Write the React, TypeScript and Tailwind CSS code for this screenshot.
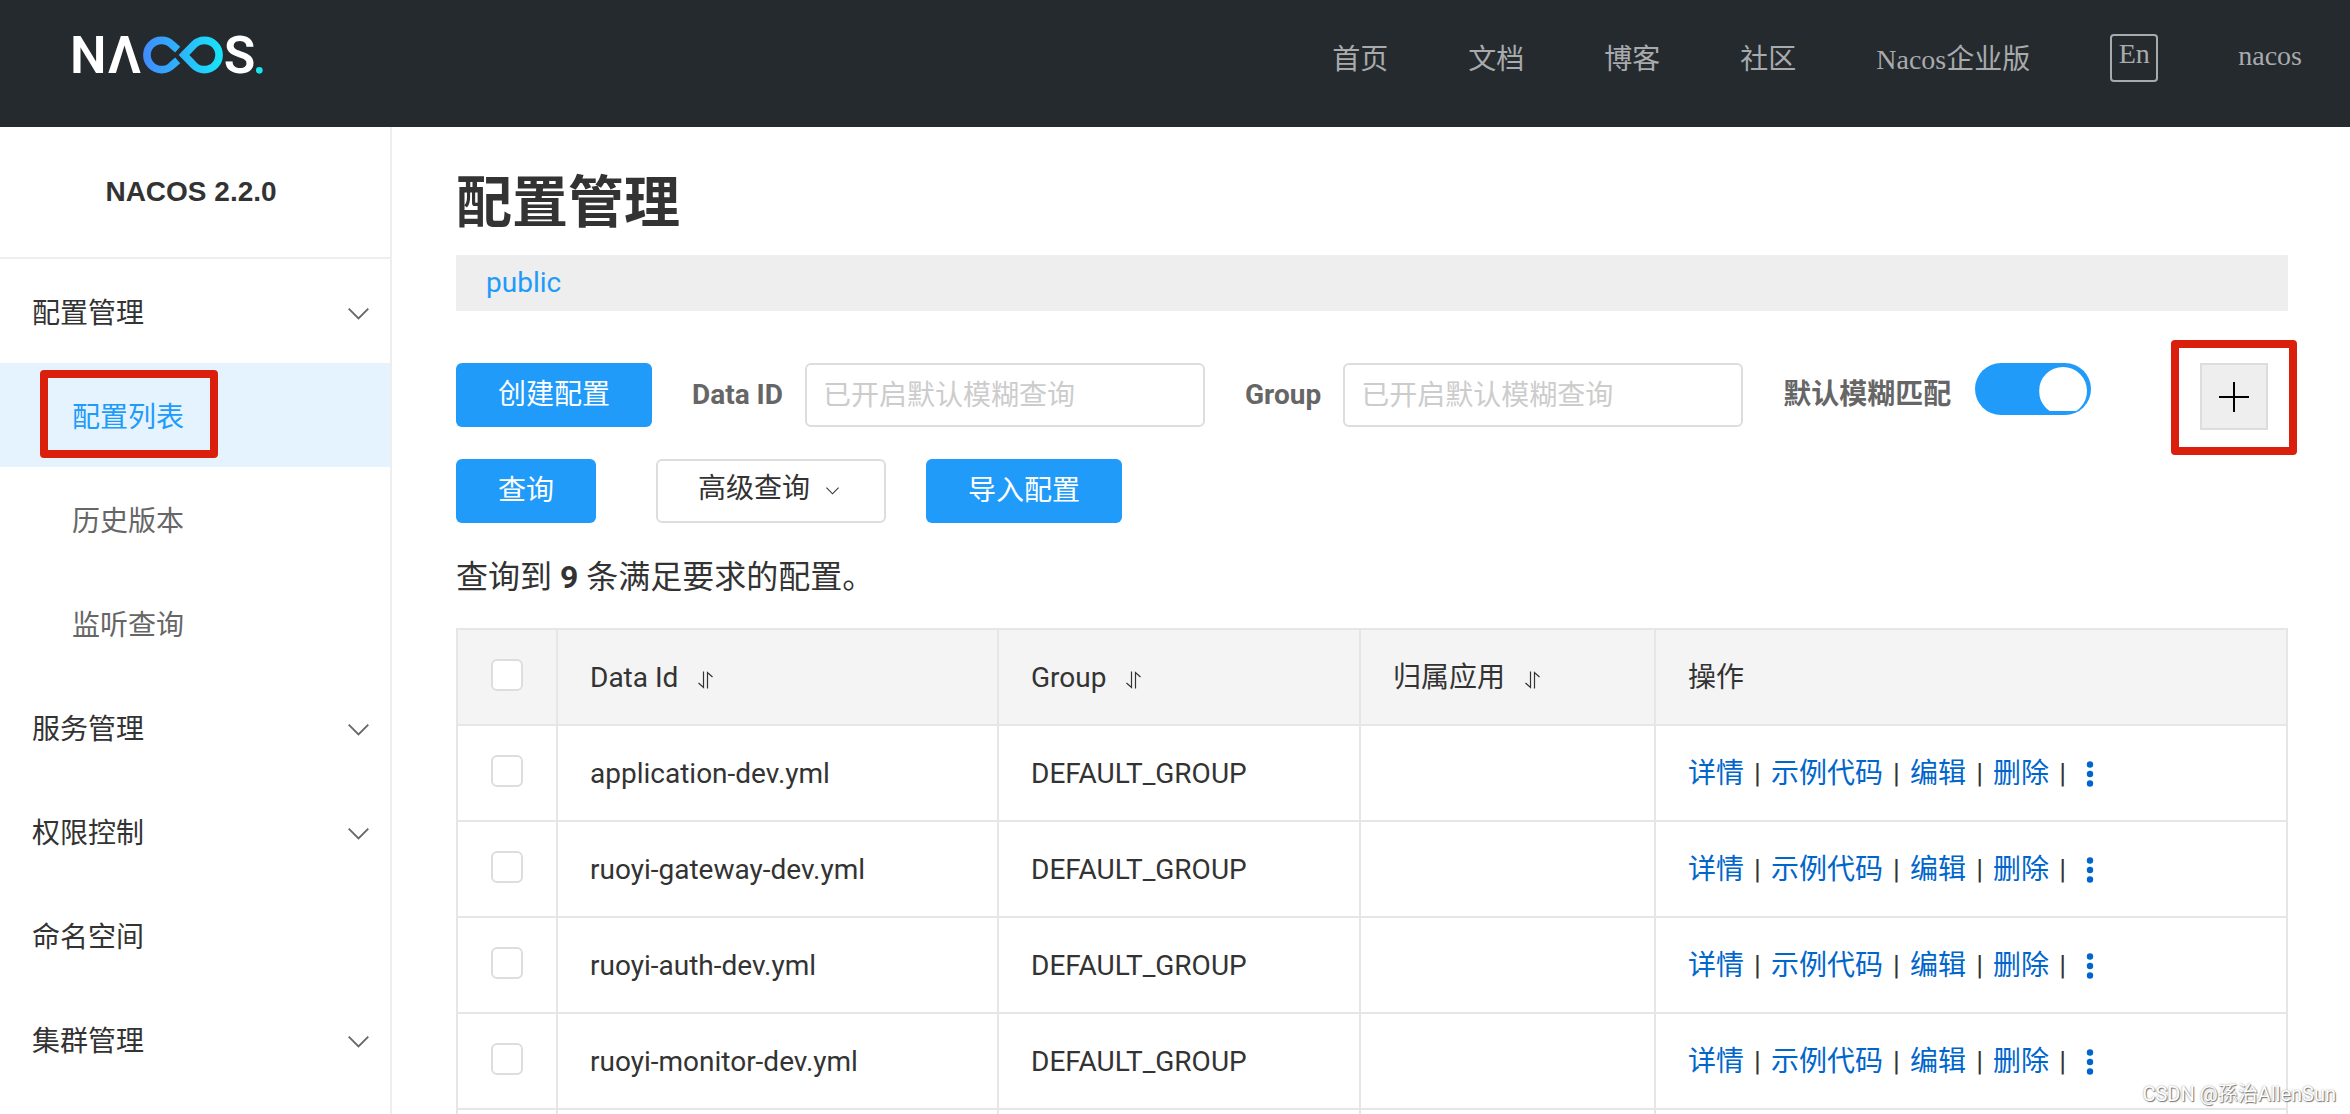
import { useState } from 'react';

const navLinks = ['首页', '文档', '博客', '社区', 'Nacos企业版'];

const menus = [
  { name: '配置管理', children: ['配置列表', '历史版本', '监听查询'], expandable: true },
  { name: '服务管理', children: [], expandable: true },
  { name: '权限控制', children: [], expandable: true },
  { name: '命名空间', children: [], expandable: false },
  { name: '集群管理', children: [], expandable: true },
];

const configs = [
  { dataId: 'application-dev.yml', group: 'DEFAULT_GROUP', app: '' },
  { dataId: 'ruoyi-gateway-dev.yml', group: 'DEFAULT_GROUP', app: '' },
  { dataId: 'ruoyi-auth-dev.yml', group: 'DEFAULT_GROUP', app: '' },
  { dataId: 'ruoyi-monitor-dev.yml', group: 'DEFAULT_GROUP', app: '' },
];

const actions = ['详情', '示例代码', '编辑', '删除'];

function Logo() {
  return (
    <svg viewBox="0 0 600 180" className="w-[200px] h-[60px]" role="img" aria-label="Nacos">
      <defs>
        <linearGradient id="loop" gradientUnits="userSpaceOnUse" x1="219" y1="90" x2="457" y2="90">
          <stop offset="0" stopColor="#418bff" />
          <stop offset="1" stopColor="#18e4f8" />
        </linearGradient>
      </defs>
      <g fill="#fff" fontFamily="Roboto" fontWeight="600" fontSize="155">
        <text x="0" y="145">N</text>
        <text x="113" y="145">Λ</text>
        <text x="461" y="145">S</text>
      </g>
      <g fill="none" stroke="url(#loop)" strokeWidth="23">
        <path d="M323 74 L306 59 A44 44 0 1 0 306 121 L323 106" />
        <path d="M342 90 L372 59 A44 44 0 1 1 372 121 Z" />
      </g>
      <circle cx="568" cy="136" r="10" fill="#19e5f0" />
    </svg>
  );
}

function Chevron({ className }: { className: string }) {
  return (
    <svg viewBox="0 0 21 12" className={className} fill="none" stroke="currentColor" strokeWidth="1.8">
      <path d="M0.7 0.7 L10.5 10.5 L20.3 0.7" />
    </svg>
  );
}

function SortIcon() {
  return (
    <svg viewBox="0 0 15 18" className="w-[15px] h-[18px] mt-1" fill="none" stroke="#333" strokeWidth="1.2">
      <path d="M5.5 0.5 V16.5 L0.5 12" />
      <path d="M9.5 17.5 V1.5 L14.5 6" />
    </svg>
  );
}

function Checkbox({ label }: { label: string }) {
  return (
    <input
      type="checkbox"
      aria-label={label}
      className="block size-8 mx-auto mb-1 appearance-none rounded-md border-2 border-[#ddd] bg-white checked:bg-[#209bfa]"
    />
  );
}

function SearchField({ id, label }: { id: string; label: string }) {
  return (
    <div className="flex items-center gap-[22px]">
      <label htmlFor={id} className="font-bold text-[#666]">{label}</label>
      <input
        id={id}
        type="text"
        placeholder="已开启默认模糊查询"
        className="w-[400px] h-16 rounded-md border-2 border-[#ddd] px-4 placeholder:text-[#ccc] outline-none"
      />
    </div>
  );
}

export default function App() {
  const [fuzzy, setFuzzy] = useState(true);

  return (
    <div className="relative flex flex-col h-screen overflow-hidden bg-white text-[28px] leading-10 text-[#333] font-[Roboto,'Noto_Sans_CJK_SC',sans-serif]">
      <header className="flex items-center justify-between h-[127px] shrink-0 pl-[70px] pr-12 pb-3 bg-[#252a2f]">
        <a href="#" className="pb-1.5"><Logo /></a>
        <nav className="flex items-center gap-20 text-[#a8aaac] font-['Liberation_Serif','Noto_Sans_CJK_SC',serif]">
          {navLinks.map((link) => (
            <a key={link} href="#" className="pt-1">{link}</a>
          ))}
          <button type="button" className="size-12 pb-2 rounded-sm border-2 border-[#a8aaac] leading-9">En</button>
          <a href="#" className="pb-1">nacos</a>
        </nav>
      </header>

      <div className="flex flex-1 min-h-0">
        {/* Sidebar */}
        <aside className="w-[392px] shrink-0 border-r-2 border-[#eee]">
          <h2 className="h-[132px] pr-2 border-b-2 border-[#eee] text-center font-bold leading-[130px] font-['Liberation_Sans',sans-serif]">NACOS 2.2.0</h2>
          {menus.map((menu) => (
            <div key={menu.name}>
              <button type="button" className="flex items-center justify-between w-full h-[104px] pl-8 pr-[21px] pt-1.5">
                {menu.name}
                {menu.expandable && <Chevron className="w-[21px] h-3 text-[#666]" />}
              </button>
              {menu.children.map((child, i) => (
                <a
                  key={child}
                  href="#"
                  className={`relative flex items-center h-[104px] pl-[72px] pt-1.5 ${i === 0 ? 'bg-[#e4f3fe] text-[#209bfa]' : 'text-[#666]'}`}
                >
                  {child}
                  {i === 0 && <span className="absolute left-10 top-[7px] w-[178px] h-[88px] rounded-sm border-8 border-[#da1f0d]" />}
                </a>
              ))}
            </div>
          ))}
        </aside>

        {/* Config list */}
        <main className="flex-1 min-w-0 pl-16 pr-[62px] pt-9">
          <h1 className="mb-3 text-[56px] leading-[80px] font-bold">配置管理</h1>
          <div className="h-14 px-[30px] bg-[#eee] leading-14">
            <a href="#" className="text-[#209bfa]">public</a>
          </div>

          <form className="mt-[52px]" onSubmit={(e) => e.preventDefault()}>
            <div className="flex items-center gap-10">
              <button type="button" className="h-16 px-[42px] rounded-md bg-[#209bfa] text-white">创建配置</button>
              <SearchField id="dataId" label="Data ID" />
              <SearchField id="group" label="Group" />
              <div className="flex items-center gap-6 h-16">
                <label htmlFor="fuzzy" className="font-bold text-[#666]">默认模糊匹配</label>
                <input
                  id="fuzzy"
                  type="checkbox"
                  role="switch"
                  checked={fuzzy}
                  onChange={(e) => setFuzzy(e.target.checked)}
                  className="self-start w-[116px] h-[52px] p-1 appearance-none rounded-full bg-[#ccc] checked:bg-[#209bfa] before:block before:size-12 before:rounded-full before:bg-white before:[clip-path:inset(0_0_4px_0)] checked:before:ml-[60px]"
                />
              </div>
              <div className="relative ml-auto mr-5 h-16">
                <button type="button" aria-label="新建" className="flex items-center justify-center w-[68px] h-[67px] border-2 border-[#ddd] bg-[#eee]">
                  <svg viewBox="0 0 30 30" className="size-[30px]" stroke="#000" strokeWidth="2">
                    <path d="M15 0 V30 M0 15 H30" />
                  </svg>
                </button>
                <span className="absolute -left-[29px] -top-[23px] w-[126px] h-[115px] rounded-sm border-8 border-[#da1f0d] pointer-events-none" />
              </div>
            </div>
            <div className="flex items-center mt-8">
              <button type="submit" className="h-16 px-[42px] rounded-md bg-[#209bfa] text-white">查询</button>
              <button type="button" className="flex items-center gap-4 ml-[60px] h-16 w-[230px] pl-10 pb-1 rounded-md border-2 border-[#ddd]">
                高级查询
                <Chevron className="w-[13px] h-2 mt-1" />
              </button>
              <button type="button" className="ml-10 h-16 px-[42px] rounded-md bg-[#209bfa] text-white">导入配置</button>
            </div>
          </form>

          <p className="mt-[30px] mb-[27px] text-[32px] leading-12">
            查询到 <strong>9</strong> 条满足要求的配置。
          </p>

          <table className="w-full table-fixed border-collapse text-left">
            <thead className="bg-[#f4f4f4]">
              <tr className="h-24">
                <th className="w-[100px] border-2 border-[#e6e6e6]"><Checkbox label="全选" /></th>
                <th className="w-[441px] px-8 pt-0.5 border-2 border-[#e6e6e6] font-normal">
                  <span className="flex items-center gap-5">Data Id <SortIcon /></span>
                </th>
                <th className="w-[362px] px-8 pt-0.5 border-2 border-[#e6e6e6] font-normal">
                  <span className="flex items-center gap-5">Group <SortIcon /></span>
                </th>
                <th className="w-[295px] px-8 pt-0.5 border-2 border-[#e6e6e6] font-normal">
                  <span className="flex items-center gap-5">归属应用 <SortIcon /></span>
                </th>
                <th className="px-8 pt-0.5 border-2 border-[#e6e6e6] font-normal">操作</th>
              </tr>
            </thead>
            <tbody>
              {configs.map((config) => (
                <tr key={config.dataId} className="h-24">
                  <td className="border-2 border-[#e6e6e6]"><Checkbox label={config.dataId} /></td>
                  <td className="px-8 pt-0.5 border-2 border-[#e6e6e6]">{config.dataId}</td>
                  <td className="px-8 pt-0.5 border-2 border-[#e6e6e6]">{config.group}</td>
                  <td className="px-8 pt-0.5 border-2 border-[#e6e6e6]">{config.app}</td>
                  <td className="px-8 pt-0.5 border-2 border-[#e6e6e6]">
                    <div className="flex items-center">
                      {actions.map((action) => (
                        <span key={action} className="flex">
                          <a href="#" className="text-[#06c]">{action}</a>
                          <span className="w-[27px] text-center">|</span>
                        </span>
                      ))}
                      <button type="button" aria-label="更多" className="ml-2.5">
                        <svg viewBox="0 0 8 26" className="w-2 h-[26px]" fill="#06c">
                          <circle cx="4" cy="3.5" r="3.2" />
                          <circle cx="4" cy="13" r="3.2" />
                          <circle cx="4" cy="22.5" r="3.2" />
                        </svg>
                      </button>
                    </div>
                  </td>
                </tr>
              ))}
              <tr className="h-24">
                <td className="border-2 border-[#e6e6e6]" />
                <td className="border-2 border-[#e6e6e6]" />
                <td className="border-2 border-[#e6e6e6]" />
                <td className="border-2 border-[#e6e6e6]" />
                <td className="border-2 border-[#e6e6e6]" />
              </tr>
            </tbody>
          </table>
        </main>
      </div>

      <span className="absolute right-3.5 bottom-1 text-xl leading-8 text-white [text-shadow:1px_1px_1px_#777,0_0_2px_#999]">CSDN @孫治AllenSun</span>
    </div>
  );
}
